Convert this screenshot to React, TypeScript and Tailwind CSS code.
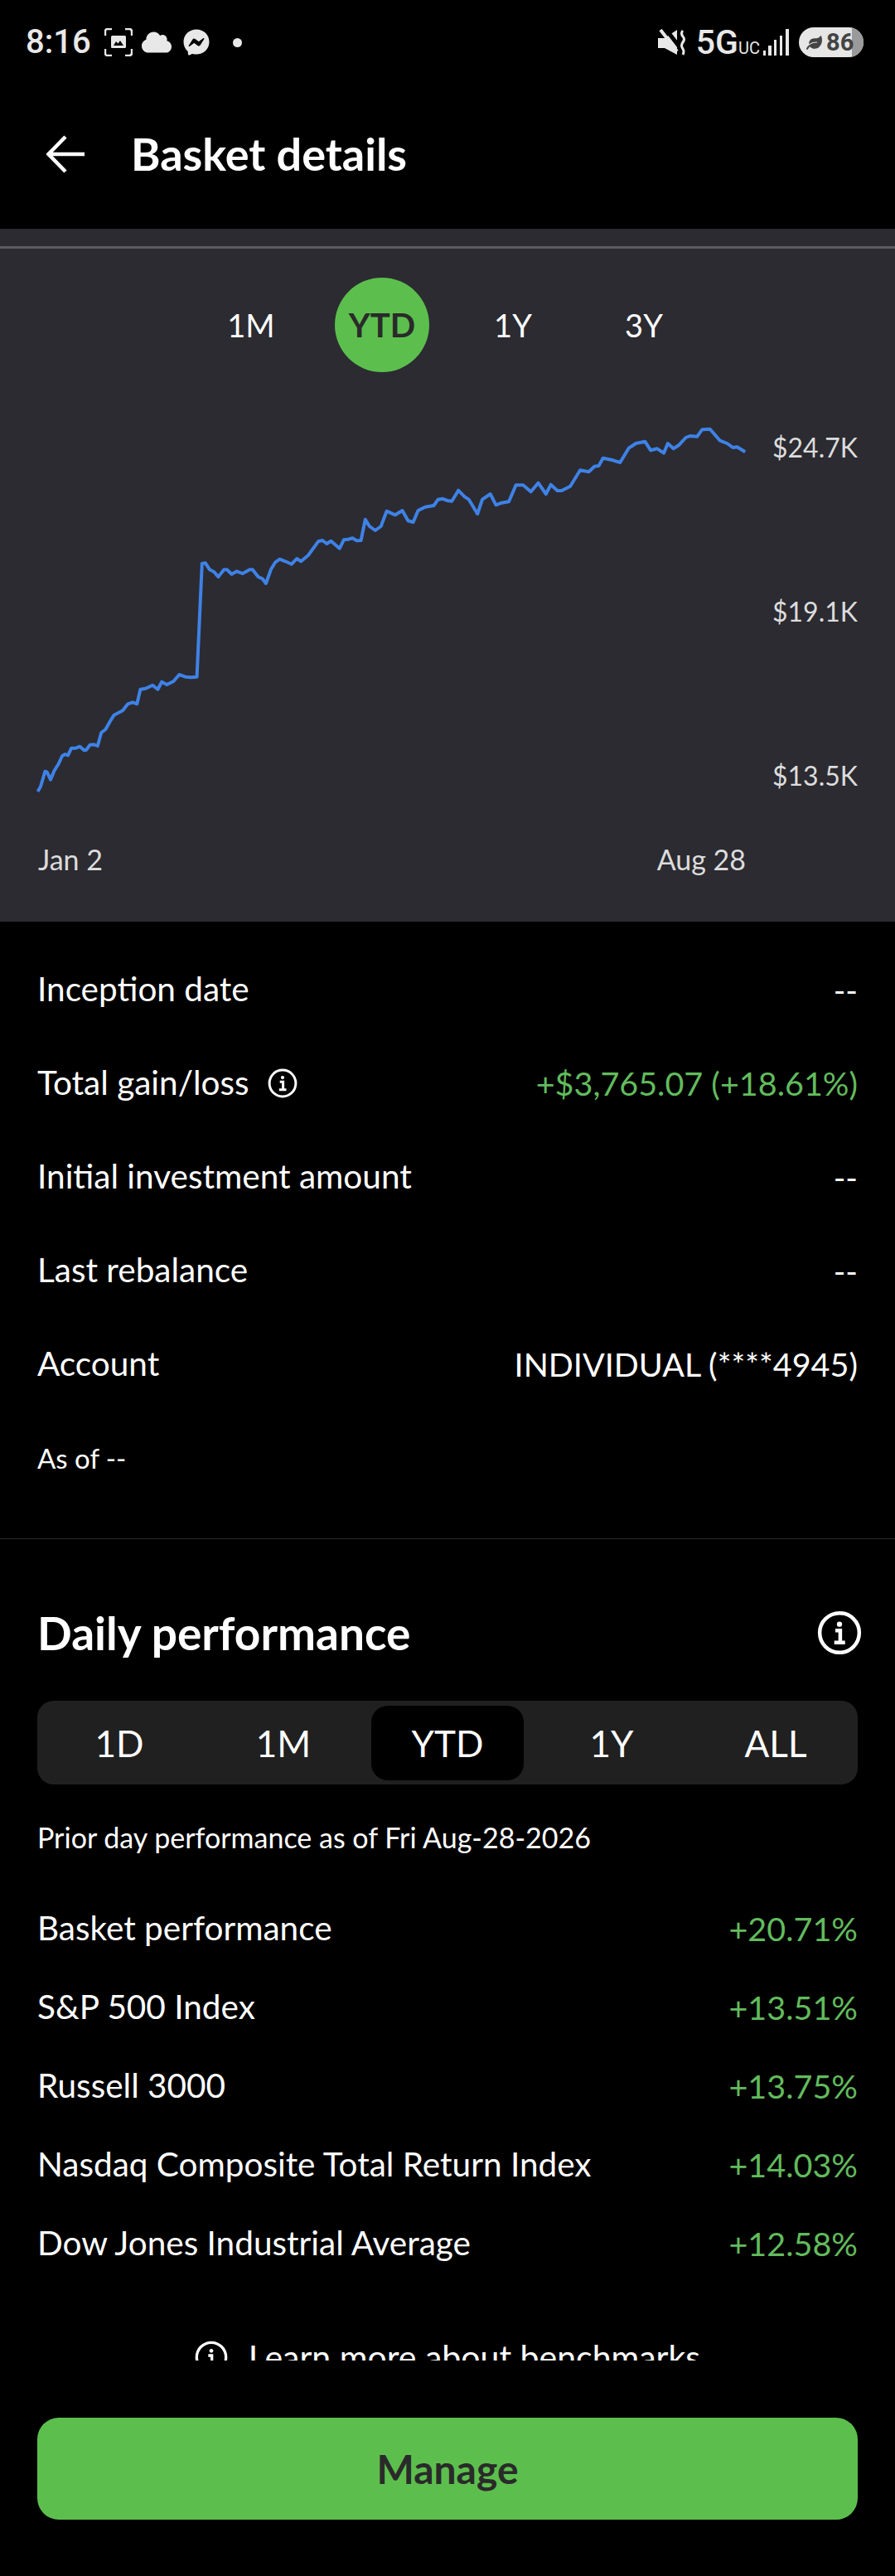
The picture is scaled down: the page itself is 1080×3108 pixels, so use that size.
import { FaCloud, FaFacebookMessenger, FaLeaf } from 'react-icons/fa'

// chart points read off the reference, x/y in page pixels
const leftPts = [
  [132, 1425], [142, 1408], [158, 1352], [165, 1355], [177, 1382], [190, 1350], [205, 1325], [218, 1296], [228, 1290],
  [238, 1294], [250, 1268], [265, 1268], [280, 1262], [295, 1276], [303, 1274], [315, 1256], [330, 1255], [342, 1260],
  [355, 1212], [370, 1200], [385, 1172], [400, 1148], [415, 1140], [430, 1132], [448, 1108], [465, 1102], [480, 1108],
  [492, 1055], [510, 1052], [535, 1040], [553, 1055], [567, 1028], [585, 1038], [608, 1026], [628, 1002], [650, 1010],
  [670, 1012], [690, 1010], [708, 600], [720, 598], [735, 622], [750, 630], [765, 648], [785, 622], [795, 622],
  [812, 638], [830, 628], [850, 636], [875, 622], [885, 622], [905, 648], [920, 655], [932, 672], [950, 620],
  [965, 595], [980, 584], [1000, 592], [1022, 602], [1040, 582], [1055, 592], [1080, 570], [1115, 520], [1130, 516],
  [1145, 528], [1160, 518], [1190, 545], [1205, 514], [1220, 512], [1235, 508], [1250, 517], [1265, 516], [1280, 440],
  [1295, 465], [1315, 480], [1335, 465], [1355, 410], [1385, 424], [1410, 408], [1430, 445], [1448, 450], [1465, 408],
  [1490, 395], [1520, 390], [1535, 368], [1550, 365], [1568, 372],
]
const rightPts = [
  [15, 374], [38, 335], [60, 358], [75, 368], [105, 420], [122, 368], [150, 348], [170, 388], [190, 380], [215, 376],
  [240, 316], [265, 316], [292, 340], [318, 308], [345, 348], [362, 314], [385, 336], [400, 336], [430, 320], [465, 262],
  [495, 268], [515, 248], [530, 246], [545, 218], [580, 226], [605, 234], [635, 182], [660, 165], [692, 158], [712, 190],
  [735, 184], [758, 200], [772, 165], [792, 184], [810, 172], [835, 144], [850, 138], [875, 140], [892, 115], [920, 113],
  [955, 155], [980, 165], [1000, 180], [1015, 178], [1043, 196],
]
const chartLine = [
  ...leftPts.map(([x, y]) => `${(x / 2.904).toFixed(1)},${(y / 3 + 480).toFixed(1)}`),
  ...rightPts.map(([x, y]) => `${(x / 2.904 + 540).toFixed(1)},${(y / 3 + 480).toFixed(1)}`),
].join(' ')

const ranges = ['1D', '1M', 'YTD', '1Y', 'ALL']

const benchmarks = [
  ['Basket performance', '+20.71%'],
  ['S&P 500 Index', '+13.51%'],
  ['Russell 3000', '+13.75%'],
  ['Nasdaq Composite Total Return Index', '+14.03%'],
  ['Dow Jones Industrial Average', '+12.58%'],
]

function InfoIcon({ className }: { className: string }) {
  return (
    <svg viewBox="0 0 24 24" fill="none" stroke="currentColor" className={className}>
      <circle cx="12" cy="12" r="10.6" strokeWidth="2" />
      <circle cx="12" cy="7.4" r="1.4" fill="currentColor" stroke="none" />
      <path d="M9.8 10.8H12.4V17M9.2 17.2H15" strokeWidth="2" />
    </svg>
  )
}

function StatusBar() {
  return (
    <div className="h-[102px] flex items-center pl-[31px] pr-[38px] text-[#e8e8e8]">
      <span className="w-[95px] text-[40px] leading-none font-medium font-['Roboto',sans-serif]">8:16</span>
      <svg viewBox="0 0 34 34" fill="none" className="w-[34px] h-[34px]">
        <path d="M1 9V4Q1 1 4 1H9M25 1H30Q33 1 33 4V9M33 25V30Q33 33 30 33H25M9 33H4Q1 33 1 30V25" stroke="currentColor" strokeWidth="2.4" />
        <rect x="8" y="9" width="18" height="15" rx="1.5" fill="currentColor" />
        <path d="M11 21L14 16L16.5 18.5L19 15L23 21Z" fill="#000" />
      </svg>
      <FaCloud className="w-[36px] h-[36px] ml-[11px]" />
      <FaFacebookMessenger className="w-[32px] h-[32px] ml-[14px]" />
      <span className="w-[11px] h-[11px] rounded-full bg-[#e8e8e8] ml-[28px]" />
      <div className="flex-1" />
      <svg viewBox="0 0 34 32" fill="none" className="w-[34px] h-[32px]">
        <path d="M0 11H8L23 1V31L8 23H0Z" fill="currentColor" />
        <path d="M7 -3L27 23" stroke="#000" strokeWidth="5" />
        <path d="M3 1L23 27" stroke="currentColor" strokeWidth="4" />
        <path d="M30 2Q27 5 30 9Q33 12 30 16Q27 20 30 24Q32 27 30 31" stroke="currentColor" strokeWidth="3" />
      </svg>
      <span className="ml-[12px] text-[41px] leading-none font-medium font-['Roboto',sans-serif]">5G</span>
      <span className="mt-[13px] text-[20px] leading-none font-['Roboto',sans-serif]">UC</span>
      <svg viewBox="0 0 33 32" fill="currentColor" className="w-[33px] h-[32px] ml-[4px]">
        <rect x="0" y="26" width="3" height="6" />
        <rect x="6" y="20" width="4" height="12" />
        <rect x="13" y="13" width="3" height="19" />
        <rect x="20" y="8" width="3" height="24" />
        <rect x="27" y="0" width="4" height="32" />
      </svg>
      <div className="relative ml-[10px] w-[78px] h-[36px] rounded-full bg-[#e6e6e6] overflow-hidden flex items-center">
        <div className="absolute right-0 top-0 bottom-0 w-[14px] bg-[#9a9a9a]" />
        <FaLeaf className="relative w-[19px] h-[19px] ml-[9px] text-[#444]" />
        <span className="relative ml-[5px] text-[29px] leading-none font-bold text-[#444] font-['Roboto',sans-serif]">86</span>
      </div>
    </div>
  )
}

function Row({ label, value, green, info }: { label: string; value: string; green?: boolean; info?: boolean }) {
  return (
    <div className="h-[113px] flex items-center justify-between">
      <div className="flex items-center gap-[22px] text-[40.5px]">
        <span>{label}</span>
        {info && <InfoIcon className="w-[36px] h-[36px]" />}
      </div>
      <span className={green ? 'text-[39.5px] text-[#62bb5d]' : 'text-[39.5px]'}>{value}</span>
    </div>
  )
}

export default function App() {
  return (
    <div className="w-[1080px] h-[3108px] bg-black text-white flex flex-col overflow-hidden font-['Lato',sans-serif]">
      <StatusBar />
      <div className="h-[174px] flex items-center pl-[56px] pb-[6px]">
        <svg viewBox="0 0 46 46" fill="none" stroke="currentColor" strokeWidth="4.5" className="w-[46px] h-[46px]">
          <path d="M46 23H3M23 2L2.5 23L23 44" />
        </svg>
        <h1 className="ml-[56px] text-[54px] leading-none font-bold">Basket details</h1>
      </div>

      {/* chart panel */}
      <section className="h-[836px] bg-[#2b2b31] pt-[21px]">
        <div className="h-[3px] bg-[#5c5c61]" />
        <div className="mt-[35px] flex justify-center gap-[44px] text-[38px]">
          <button className="w-[114px] h-[114px]">1M</button>
          <button className="w-[114px] h-[114px] rounded-full bg-[#5cbf4d] text-[40px] text-[#2a2a2a] font-bold">YTD</button>
          <button className="w-[114px] h-[114px]">1Y</button>
          <button className="w-[114px] h-[114px]">3Y</button>
        </div>
        <div className="mt-[51px] flex pl-[40px] pr-[45px]">
          <svg viewBox="40 500 866 480" className="w-[866px] h-[480px]">
            <polyline points={chartLine} fill="none" stroke="#3f82e6" strokeWidth="4" strokeLinejoin="round" />
          </svg>
          <div className="flex-1 pt-[20px] flex flex-col gap-[158px] items-end text-[32px] leading-[40px] text-[#dcdcdc]">
            <span>$24.7K</span>
            <span>$19.1K</span>
            <span>$13.5K</span>
          </div>
        </div>
        <div className="mt-[37px] w-[900px] pl-[46px] flex justify-between text-[34px] leading-[40px] text-[#dcdcdc]">
          <span>Jan 2</span>
          <span>Aug 28</span>
        </div>
      </section>

      {/* summary */}
      <section className="h-[745px] pt-[25px] px-[45px] border-b-[1px] border-[#2a2a2a]">
        <Row label="Inception date" value="--" />
        <Row label="Total gain/loss" value="+$3,765.07 (+18.61%)" green info />
        <Row label="Initial investment amount" value="--" />
        <Row label="Last rebalance" value="--" />
        <Row label="Account" value="INDIVIDUAL (****4945)" />
        <p className="mt-[37px] text-[33px] leading-[40px]">As of --</p>
      </section>

      {/* daily performance, cut off by the footer */}
      <section className="h-[991px] overflow-hidden px-[45px]">
        <div className="mt-[83px] h-[60px] flex items-center justify-between">
          <h2 className="text-[55px] leading-none font-bold">Daily performance</h2>
          <InfoIcon className="w-[54px] h-[54px] mr-[-5px]" />
        </div>
        <div className="mt-[52px] h-[101px] rounded-[20px] bg-[#202020] grid grid-cols-5 text-[44px]">
          {ranges.map(r => (
            <div key={r} className="flex items-center justify-center">
              {r === 'YTD' ? (
                <div className="w-[184px] h-[90px] rounded-[20px] bg-black flex items-center justify-center">{r}</div>
              ) : r}
            </div>
          ))}
        </div>
        <p className="mt-[44px] text-[34px] leading-[40px]">Prior day performance as of Fri Aug-28-2026</p>
        <div className="mt-[42px]">
          {benchmarks.map(([name, pct]) => (
            <div key={name} className="h-[95px] flex items-center justify-between">
              <span className="text-[40.5px]">{name}</span>
              <span className="text-[39.5px] text-[#62bb5d]">{pct}</span>
            </div>
          ))}
        </div>
        <div className="mt-[66px] flex items-center justify-center gap-[25px] text-[41px] leading-[48px]">
          <InfoIcon className="w-[40px] h-[40px]" />
          <span>Learn more about benchmarks</span>
        </div>
      </section>

      <div className="px-[45px] pt-[69px]">
        <button className="w-full h-[123px] rounded-[26px] bg-[#5cbf4d] text-[48px] font-bold text-[#2a2a2a]">Manage</button>
      </div>
    </div>
  )
}
